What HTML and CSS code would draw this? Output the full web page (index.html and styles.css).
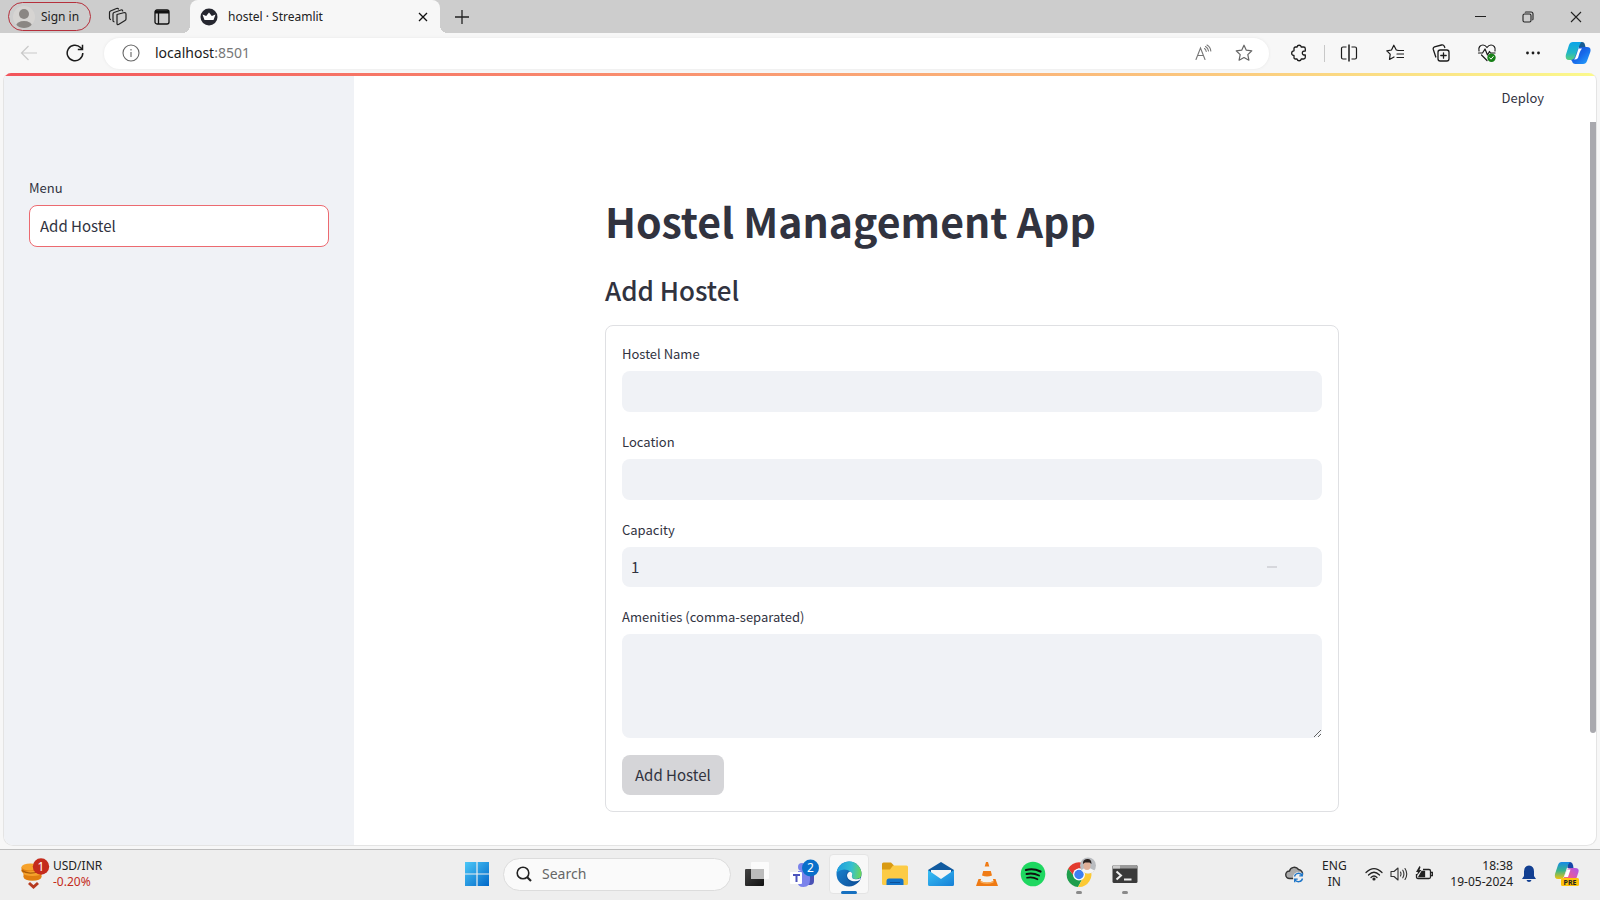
FILE: index.html
```html
<!DOCTYPE html>
<html lang="en">
<head>
<meta charset="utf-8">
<title>hostel · Streamlit</title>
<link rel="stylesheet" href="styles.css">
</head>
<body>
<div class="desktop">
  <header class="tabstrip">
    <button class="signin" type="button">
      <svg width="26" height="26" viewBox="0 0 26 26"><defs><clipPath id="av"><circle cx="13" cy="13" r="11"/></clipPath></defs><circle cx="13" cy="13" r="11" fill="#d6d4d2"/><g clip-path="url(#av)" fill="#8a8683"><circle cx="13" cy="10" r="5"/><ellipse cx="13" cy="22" rx="8" ry="5"/></g></svg>
      <span>Sign in</span>
    </button>
    <button class="strip-btn" type="button" aria-label="Workspaces">
      <svg width="20" height="20" viewBox="0 0 20 20" fill="none" stroke="#222" stroke-width="1.2" stroke-linejoin="round" stroke-linecap="round"><path d="M9 7.500 16.500 5.500Q18 5.500 18 7V12Q18 13 17 13.500L10.500 17.500Q9 18 9 16.500Z"/><path d="M6 14.800Q5 14.500 5 13.500V7Q5 6 6 5.500L13 3Q14.500 2.700 14.700 4"/><path d="M2.500 12.500Q1.500 12 1.500 11V5.500Q1.500 4.500 2.500 4L8.500 1.500Q10 1 10.500 2"/></svg>
    </button>
    <button class="strip-btn" type="button" aria-label="Tab actions">
      <svg width="18" height="18" viewBox="0 0 18 18" fill="none" stroke="#111" stroke-width="1.3"><rect x="2" y="2" width="14" height="14" rx="2"/><path d="M2 4h14" stroke-width="3"/><path d="M5.500 5v11"/></svg>
    </button>
    <div class="tab">
      <svg width="18" height="18" viewBox="0 0 18 18"><circle cx="9" cy="9" r="8.500" fill="#262730"/><path d="M2.500 6.500 6.200 8 9 4.500 11.800 8 15.500 6.500 13.500 12H4.500Z" fill="#fff"/></svg>
      <span class="tab-title">hostel · Streamlit</span>
      <button class="tab-close" type="button" aria-label="Close tab"><svg width="10" height="10" viewBox="0 0 10 10" stroke="#111" stroke-width="1.300"><path d="M1 1l8 8M9 1 1 9"/></svg></button>
    </div>
    <button class="strip-btn" type="button" aria-label="New tab"><svg width="14" height="14" viewBox="0 0 14 14" stroke="#222" stroke-width="1.300"><path d="M7 0v14M0 7h14"/></svg></button>
    <div class="win-controls">
      <button type="button" aria-label="Minimize"><svg width="12" height="12" viewBox="0 0 12 12" stroke="#222" stroke-width="1"><path d="M1 5.500h11"/></svg></button>
      <button type="button" aria-label="Restore"><svg width="12" height="12" viewBox="0 0 12 12" fill="none" stroke="#222" stroke-width="1.100"><rect x="1" y="3" width="8" height="8" rx="1.500"/><path d="M3 1.500Q3.300 1 4 1H9Q11 1 11 3V8Q11 8.800 10.300 9"/></svg></button>
      <button type="button" aria-label="Close"><svg width="12" height="12" viewBox="0 0 12 12" stroke="#222" stroke-width="1.100"><path d="M1 1l10 10M11 1 1 11"/></svg></button>
    </div>
  </header>

  <nav class="toolbar">
    <button class="tool" type="button" aria-label="Back" disabled><svg width="18" height="16" viewBox="0 0 18 16" fill="none" stroke="#c9c9c9" stroke-width="1.200"><path d="M17 8H1.500M8.500 1 1.500 8l7 7"/></svg></button>
    <button class="tool" type="button" aria-label="Refresh"><svg width="18" height="18" viewBox="0 0 18 18" fill="none" stroke="#1b1b1b" stroke-width="1.500"><path d="M16.800 9A7.800 7.800 0 1 1 14.500 3.500L16.500 5.500"/><path d="M16.500 .8V5.500H11.800"/></svg></button>
    <div class="address">
      <svg width="18" height="18" viewBox="0 0 18 18" fill="none" stroke="#666" stroke-width="1.100"><circle cx="9" cy="9" r="8"/><path d="M9 8v5M9 5v1.400"/></svg>
      <a class="url" href="#">localhost<span>:8501</span></a>
      <button type="button" aria-label="Read aloud"><svg width="18" height="18" viewBox="0 0 18 18" fill="none" stroke="#777" stroke-width="1.100" stroke-linecap="round"><path d="M2 15.500 6.500 4 11 15.500M3.500 11.500h6"/><path d="M10.500 4.500Q12 5.500 12.200 7.500M11.500 2.500Q14.200 4 14.500 7M13 1Q16.500 3 16.800 7"/></svg></button>
      <button type="button" aria-label="Add to favorites"><svg width="18" height="18" viewBox="0 0 18 18" fill="none" stroke="#666" stroke-width="1.200" stroke-linejoin="round"><path d="M9 1.200l2.300 5 5.500.6-4 3.800 1.100 5.600L9 13.500l-4.900 2.700 1.100-5.600-4-3.800 5.500-.6Z"/></svg></button>
    </div>
    <button class="tool" type="button" aria-label="Extensions"><svg width="18" height="18" viewBox="0 0 18 18" fill="none" stroke="#1b1b1b" stroke-width="1.300" stroke-linejoin="round"><path d="M7 3A2.200 2.200 0 0 1 11.300 3H13.500Q15.300 3 15.300 4.800V7Q12.300 6.800 12.300 9T15.300 11V13.200Q15.300 15 13.500 15H11.300A2.200 2.200 0 0 1 7 15H5.500Q4 15 4 13.500V11.500A2.300 2.300 0 0 1 4 6.800V4.500Q4 3 5.500 3Z"/></svg></button>
    <span class="divider"></span>
    <button class="tool" type="button" aria-label="Split screen"><svg width="18" height="18" viewBox="0 0 18 18" fill="none" stroke="#1b1b1b" stroke-width="1.200"><path d="M6.500 3H3Q1.500 3 1.500 4.500V13.500Q1.500 15 3 15H6.500M11.500 3H15Q16.500 3 16.500 4.500V13.500Q16.500 15 15 15H11.500"/><path d="M9 .5v17" stroke-width="1.500"/></svg></button>
    <button class="tool" type="button" aria-label="Favorites"><svg width="18" height="18" viewBox="0 0 18 18" fill="none" stroke="#1b1b1b" stroke-width="1.200" stroke-linejoin="round" stroke-linecap="round"><path d="M12 6.300 10.300 6 7.800 1.200 5.500 6 .8 6.800 4.200 10.200 3.500 15.500 8 13M12.500 6.500h5M11 10h6.500M11 13.500h6.500"/></svg></button>
    <button class="tool" type="button" aria-label="Collections"><svg width="18" height="18" viewBox="0 0 18 18" fill="none" stroke="#1b1b1b" stroke-width="1.300" stroke-linecap="round"><rect x="6" y="6" width="11" height="11" rx="2.200"/><path d="M11.500 8.800v5.400M8.800 11.500h5.400M3.800 13 1.300 5.500Q.8 3.500 2.500 2.800L9.500 1Q11.500.5 12.300 2.300L12.800 3.500"/></svg></button>
    <button class="tool" type="button" aria-label="Browser essentials"><svg width="20" height="20" viewBox="0 0 20 20" fill="none" stroke="#1b1b1b" stroke-width="1.200" stroke-linejoin="round" stroke-linecap="round"><path d="M2 8C1 4 3.500 2 6 2 8 2 9.300 3.500 10 4.500 10.700 3.500 12 2 14 2 16.500 2 19 4.500 18 8M4.500 12 10 17.500"/><path d="M1.500 10H5.500L8 6 10.500 12 12.500 8.500 13.500 10H18"/><circle cx="14.500" cy="14.800" r="4.200" fill="#178017" stroke="none"/><path d="M12.700 14.800l1.300 1.400 2.300-2.700" stroke="#fff" stroke-width="1"/></svg></button>
    <button class="tool" type="button" aria-label="Settings and more"><svg width="16" height="4" viewBox="0 0 16 4" fill="#1b1b1b"><circle cx="2.500" cy="2" r="1.400"/><circle cx="8" cy="2" r="1.400"/><circle cx="13.500" cy="2" r="1.400"/></svg></button>
    <button class="tool last" type="button" aria-label="Copilot"><svg width="26" height="24" viewBox="0 0 26 24"><defs><linearGradient id="c1" x1="0" y1="0" x2="0" y2="1"><stop offset="0" stop-color="#0aa4ea"/><stop offset=".6" stop-color="#22b7c4"/><stop offset="1" stop-color="#5bd07c"/></linearGradient><linearGradient id="c2" x1="0" y1="0" x2="1" y2="1"><stop offset="0" stop-color="#1748c9"/><stop offset=".5" stop-color="#1768e9"/><stop offset="1" stop-color="#27a8ff"/></linearGradient></defs><path d="M13 1h4q2.500 0 3 3l1 4h-7Z" fill="#155a92"/><path d="M8 1h8.500Q14.500 3 13 9L11 15Q10 19 7 19H4Q0 19 .800 14L4 4Q5 1 8 1Z" fill="url(#c1)"/><path d="M6 19q2.500 0 4-3l3-8q1-2 3-2h6q4.500 0 3.300 5L22 20q-1 3-4 3H10.500Q7.500 23 7 20Z" fill="url(#c2)"/><path d="M13.500 7.500h3.500Q15.500 9 14.500 12L13 17Q12 18.500 9 18.500 10.500 17 11.500 13.500Z" fill="#fff"/></svg></button>
  </nav>

  <div class="page">
    <div class="decoration"></div>
    <aside class="sidebar">
      <label for="menu">Menu</label>
      <select id="menu"><option>Add Hostel</option></select>
    </aside>
    <div class="view">
      <div class="app-header"><button type="button">Deploy</button></div>
      <main class="content">
        <h1>Hostel Management App</h1>
        <h2>Add Hostel</h2>
        <form class="form">
          <div class="field"><label for="name">Hostel Name</label><input id="name" type="text"></div>
          <div class="field"><label for="location">Location</label><input id="location" type="text"></div>
          <div class="field"><label for="capacity">Capacity</label>
            <div class="number"><input id="capacity" type="number" value="1" min="1"><button type="button" aria-label="Decrease" disabled><svg width="10" height="2" viewBox="0 0 10 2"><path d="M0 1h10" stroke="#d6d7dc" stroke-width="2"/></svg></button></div>
          </div>
          <div class="field area"><label for="amenities">Amenities (comma-separated)</label><textarea id="amenities"></textarea></div>
          <button class="submit" type="button">Add Hostel</button>
        </form>
      </main>
    </div>
    <div class="scroll"><div class="thumb"></div></div>
  </div>

  <footer class="taskbar">
    <div class="widget">
      <svg width="30" height="34" viewBox="0 0 30 34"><g fill="#e07f10"><ellipse cx="12.500" cy="20" rx="9" ry="3.800"/><path d="M3.500 16h18v4h-18z"/><path d="M1.500 10h18v4h-18z"/><ellipse cx="10.500" cy="14" rx="9" ry="3.500"/></g><g fill="#f6a22b"><ellipse cx="12.500" cy="16.500" rx="9" ry="2.500"/><ellipse cx="10.500" cy="10" rx="9" ry="3.500"/></g><path d="M2 13.500q6 4.500 17 1" stroke="#a95c0a" stroke-width="1.200" fill="none"/><path d="M9 26l4.500 4 4.500-4" fill="none" stroke="#b63a20" stroke-width="3"/><circle cx="21" cy="9.500" r="8.200" fill="#c42b1c"/><text class="badge-text" x="21" y="14" text-anchor="middle">1</text></svg>
      <div class="rate"><span>USD/INR</span><span class="down">-0.20%</span></div>
    </div>
    <div class="apps">
      <button class="app" type="button" aria-label="Start"><svg width="24" height="24" viewBox="0 0 24 24"><defs><linearGradient id="w" x1="0" y1="0" x2="1" y2="1"><stop offset="0" stop-color="#4cc8f8"/><stop offset="1" stop-color="#0067c8"/></linearGradient></defs><path d="M0 0h11.400v11.400H0zM12.600 0H24v11.400H12.600zM0 12.600h11.400V24H0zM12.600 12.600H24V24H12.600z" fill="url(#w)"/></svg></button>
      <label class="search"><svg width="16" height="16" viewBox="0 0 16 16" fill="none" stroke="#222"><circle cx="7" cy="7" r="5.800" stroke-width="1.600"/><path d="M11 11l4 4" stroke-width="2.200"/></svg><input type="text" placeholder="Search" aria-label="Search"></label>
      <button class="app" type="button" aria-label="Task view"><svg width="26" height="26" viewBox="0 0 26 26"><defs><linearGradient id="tv" x1="0" y1="0" x2="1" y2="1"><stop offset="0" stop-color="#444"/><stop offset="1" stop-color="#111"/></linearGradient></defs><rect x="1" y="8" width="19" height="17" rx="1" fill="url(#tv)"/><rect x="7" y="1" width="18" height="17" rx="1" fill="#fff" fill-opacity=".75"/><path d="M7 8h13v10H7z" fill="#bbb"/></svg></button>
      <button class="app" type="button" aria-label="Teams"><svg width="32" height="32" viewBox="0 0 32 32"><path d="M20 14h7v9q0 4-4 4h-3z" fill="#4a52b5"/><path d="M11 13h12v9q0 7-6.500 7T11 23z" fill="#7b83eb"/><circle cx="15" cy="9" r="4" fill="#7b83eb"/><rect x="3" y="14" width="12" height="12" rx="1" fill="#fff"/><path d="M6 17h7M9.500 17v7" stroke="#4b53bc" stroke-width="2"/><circle cx="23.500" cy="10" r="8.500" fill="#0a6fca"/><text class="badge-text" x="23.500" y="14" text-anchor="middle">2</text></svg></button>
      <button class="app active" type="button" aria-label="Edge"><svg width="26" height="26" viewBox="0 0 26 26"><defs><linearGradient id="e1" x1="0" y1=".3" x2="1" y2=".4"><stop offset="0" stop-color="#1e9de0"/><stop offset=".6" stop-color="#35bfd0"/><stop offset="1" stop-color="#69d65d"/></linearGradient><linearGradient id="e2" x1="0" y1="0" x2="1" y2="1"><stop offset="0" stop-color="#1b8bd8"/><stop offset="1" stop-color="#0c4a94"/></linearGradient></defs><circle cx="13" cy="13" r="12.500" fill="url(#e2)"/><path d="M.6 11.500A12.500 12.500 0 0 1 25.500 13q0 5-5.500 5-5 0-4-3 1-2-1-4Q8 6 .6 11.500Z" fill="url(#e1)"/><path d="M10.500 14q0-3 3-3.500 3 .5 2.500 4-1 3 3 3.600 3.500.3 5.800-1.500-.5 3.500-3.500 5.500-8 1-10.500-5Z" fill="#0d549d"/><path d="M11 14q.5-3 3-3.500 3 1 2 4-1 3.500 4 3.800 2.500 0 5-1.500l-1.500 2.500q-3 1.500-7.500.7-5-1.500-5-6Z" fill="#f7f8f9"/></svg></button>
      <button class="app" type="button" aria-label="File Explorer"><svg width="26" height="26" viewBox="0 0 26 26"><path d="M0 3q0-1.500 1.500-1.500H9L12 4.500V9H0z" fill="#d99a12"/><path d="M0 8.500h8L11 4.500H24.500Q26 4.500 26 6V22.500Q26 24 24.500 24H1.500Q0 24 0 22.500z" fill="#fccb45"/><path d="M4.500 24V20q0-2.500 2.500-2.500H19q2.500 0 2.500 2.500v4z" fill="#1273c9"/><path d="M8 21.500h10" stroke="#0b4f99"/></svg></button>
      <button class="app" type="button" aria-label="Mail"><svg width="26" height="26" viewBox="0 0 26 26"><defs><linearGradient id="m" x1="0" y1="0" x2="1" y2="1"><stop offset="0" stop-color="#39c1f5"/><stop offset="1" stop-color="#167fd6"/></linearGradient></defs><path d="M0 9 13 1l13 8v5H0z" fill="#105a9f"/><path d="M3 9h20v8H3z" fill="#f4f4f4"/><path d="M0 9l13 9L26 9v14.500Q26 25 24.500 25H1.500Q0 25 0 23.500z" fill="url(#m)"/></svg></button>
      <button class="app" type="button" aria-label="VLC"><svg width="24" height="26" viewBox="0 0 24 26"><path d="M3.500 18h17L23 25H1z" fill="#ef7a13"/><path d="M11 1h2L18.500 20q-6.500 3-13 0z" fill="#f1f1ef"/><path d="M11 1h2l1.300 4.500H9.700zM8.200 10h7.600l1.200 4.500q-5 2-10 0z" fill="#f07c16"/><path d="M5.500 20q6.500 3 13 0v1.500q-6.500 2.500-13 0z" fill="#f9b05f"/></svg></button>
      <button class="app" type="button" aria-label="Spotify"><svg width="26" height="26" viewBox="0 0 26 26" fill="none" stroke="#101010" stroke-linecap="round"><circle cx="13" cy="13" r="12.300" fill="#1ed760" stroke="none"/><path d="M6 9q7.500-2 14.500 1.500" stroke-width="2.200"/><path d="M6.500 13q6.500-1.500 12.500 1.500" stroke-width="1.900"/><path d="M7 16.800q5.500-1.300 10.500 1.500" stroke-width="1.600"/></svg></button>
      <button class="app running" type="button" aria-label="Chrome"><svg width="36" height="36" viewBox="0 0 36 36"><path d="M7.200 12.500A12.500 12.500 0 0 0 17 31L21.800 22 13 20z" fill="#1e9e4c"/><path d="M7.200 12.500A12.500 12.500 0 0 1 28.800 12.500H17L13 20z" fill="#e33b2e"/><path d="M28.800 12.500A12.500 12.500 0 0 1 17 31L22 22V12.500z" fill="#fcc934"/><circle cx="18" cy="18.500" r="6" fill="#fff"/><circle cx="18" cy="18.500" r="4.700" fill="#3f7ff0"/><circle cx="27" cy="9.500" r="8" fill="#b9bcc0"/><path d="M20.500 14Q26 9.500 33.500 14.500A8 8 0 0 1 20.500 14Z" fill="#f4f4f4"/><ellipse cx="26" cy="9.500" rx="3.500" ry="4.500" fill="#e0b098"/><path d="M22 8Q21.500 3.500 26 3t4.500 5L28.500 6.500 24 6.500z" fill="#2a2220"/></svg></button>
      <button class="app running" type="button" aria-label="Terminal"><svg width="26" height="26" viewBox="0 0 26 26"><rect x=".5" y="4" width="25" height="18" rx="1.500" fill="#3a3a3a"/><path d="M.5 7.500V5.500Q.5 4 2 4H24q1.500 0 1.500 1.500v2z" fill="#9a9a9a"/><path d="M1 4.500h7v3H1z" fill="#ccc"/><path d="M4.500 10.500l4.500 4-4.500 4M12 18.500h7.500" fill="none" stroke="#eee" stroke-width="2"/></svg></button>
    </div>
    <div class="tray">
      <svg width="20" height="20" viewBox="0 0 20 20"><path d="M4.500 14.500A3.700 3.700 0 0 1 4.500 7 5 5 0 0 1 13.500 5.500 4.500 4.500 0 0 1 17.500 11L10 14.500Z" fill="#aaa" stroke="#333" stroke-width="1.400"/><circle cx="13.500" cy="13.500" r="5.500" fill="#eee"/><path d="M9.500 12.500A4 4 0 0 1 17 11.500M17.500 14.500A4 4 0 0 1 10 15.500M17.300 8.800v3h-3M9.700 18.200v-3h3" fill="none" stroke="#1b74c8" stroke-width="1.300"/></svg>
      <div class="lang"><span>ENG</span><span>IN</span></div>
      <div class="status">
        <svg width="18" height="16" viewBox="0 0 18 16" fill="none" stroke="#222" stroke-width="1.200" stroke-linecap="round"><path d="M1 6.500Q9-1.500 17 6.500M3.500 9Q9 3.500 14.500 9M6 11.500Q9 8.500 12 11.500"/><circle cx="9" cy="13" r="1" fill="#222"/></svg>
        <svg width="18" height="16" viewBox="0 0 18 16" fill="none" stroke="#333" stroke-width="1.100" stroke-linecap="round" stroke-linejoin="round"><path d="M1 5.500H4L8 2V14L4 10.500H1ZM10.500 6Q11.500 8 10.500 10M12.800 4.200Q15 8 12.800 11.800M15 2.500Q18.500 8 15 13.500"/></svg>
        <svg width="18" height="16" viewBox="0 0 18 16" fill="none" stroke="#222" stroke-width="1.300"><path d="M8 3.500h6q1.500 0 1.500 1.500v6q0 1.500-1.500 1.500H3Q1.500 12.500 1.500 11V8"/><path d="M16 6.500h1.500v3H16"/><path d="M4 10.500 7 5.500H9.500v5z" fill="#222"/><path d="M4.500 0 1 6H3L1.500 10 6.500 4H4.500L5.500 1z" fill="#222" stroke="none"/></svg>
      </div>
      <div class="clock"><span>18:38</span><span>19-05-2024</span></div>
      <svg width="16" height="18" viewBox="0 0 16 18" fill="#123f91"><path d="M8 .5Q13 1 13 6.500V11L15 14H1L3 11V6.500Q3 1 8 .5ZM5.500 15h5Q10 17 8 17T5.500 15Z"/></svg>
      <svg class="copilot" width="26" height="26" viewBox="0 0 26 26"><defs><linearGradient id="p1" x1="0" y1="0" x2="0" y2="1"><stop offset="0" stop-color="#1689e8"/><stop offset=".5" stop-color="#38b48c"/><stop offset="1" stop-color="#f2c40d"/></linearGradient><linearGradient id="p2" x1="1" y1="0" x2="0" y2="1"><stop offset="0" stop-color="#a857ef"/><stop offset=".6" stop-color="#ef5c92"/><stop offset="1" stop-color="#fb963d"/></linearGradient></defs><path d="M13 1h3q3 0 3.500 6h-6z" fill="#1647a8"/><path d="M7.500 1H16Q14 3 12.500 8L10.500 14q-1 4-4 4H4q-4 0-3-5L4 4Q5 1 7.500 1Z" fill="url(#p1)"/><path d="M8 19q2-2 3-5l2-5q1-2 3-2h5q4.500 0 3.500 4L22 18.500q-1 3-4 3H8z" fill="url(#p2)"/><path d="M13 8.500h3.500L14 16h-4z" fill="#fff"/><rect x="7" y="17" width="18" height="8" rx="1.500" fill="#ffc20a"/><text class="pre" x="16" y="24" text-anchor="middle">PRE</text></svg>
    </div>
  </footer>
</div>
</body>
</html>
```
FILE: styles.css
```css
* { box-sizing: border-box; }
body { margin: 0; font-family: "Noto Sans", "Open Sans", sans-serif; font-size: 13px; color: #222; }
button { border: 0; background: none; padding: 0; margin: 0; font: inherit; color: inherit; }
svg { display: block; flex: none; }
input, select, textarea { font: inherit; color: inherit; border: 0; outline: 0; margin: 0; }

.desktop { min-height: 100vh; display: flex; flex-direction: column; background: #f7f7f7; }

/* Browser chrome */
.tabstrip { display: flex; align-items: center; height: 33px; padding-left: 8px; background: #cdcdcd; }
.signin { display: flex; align-items: center; gap: 4px; width: 83px; height: 29px; padding-left: 2px; border: 1px solid #b5303c; border-radius: 15px; font-size: 12px; margin-right: 5px; white-space: nowrap; }
.strip-btn { display: flex; align-items: center; justify-content: center; width: 44px; height: 33px; }
.tab { position: relative; display: flex; align-items: center; width: 250px; height: 33px; margin-left: 6px; padding: 0 10px; gap: 10px; background: #f7f7f7; border-radius: 8px 8px 0 0; font-size: 12px; }
.tab::before, .tab::after { content: ""; position: absolute; bottom: 0; width: 8px; height: 8px; }
.tab::before { left: -8px; background: radial-gradient(circle at 0 0, transparent 8px, #f7f7f7 8px); }
.tab::after { right: -8px; background: radial-gradient(circle at 100% 0, transparent 8px, #f7f7f7 8px); }
.tab-title { flex: 1; }
.tab-close { padding: 2px; }
.win-controls { display: flex; margin-left: auto; }
.win-controls button { display: flex; align-items: center; justify-content: center; width: 48px; height: 33px; }

.toolbar { display: flex; align-items: center; height: 40px; padding-left: 6px; }
.tool { display: flex; align-items: center; justify-content: center; width: 46px; height: 36px; }
.tool.last { width: 44px; }
.address { flex: 1; display: flex; align-items: center; height: 31px; margin: 0 7px 0 6px; padding: 0 5px 0 18px; background: #fff; border-radius: 16px; box-shadow: 0 0 3px #e6e6e6; }
.address button { display: flex; align-items: center; justify-content: center; width: 41px; height: 30px; }
.url { flex: 1; margin-left: 15px; font-size: 14px; line-height: 20px; padding-bottom: 1px; color: #1b1b1b; text-decoration: none; }
.url span { color: #777; }
.divider { width: 1px; height: 17px; margin: 0 1px 0 2px; background: #c8c8c8; }

/* Streamlit page */
.page { position: relative; flex: 1; display: flex; margin: 0 3px 3px; border: 1px solid #e4e4e4; border-top: 0; border-radius: 8px 8px 10px 10px; overflow: hidden; background: #fff; color: #31333f; font-family: "Noto Sans CJK SC", "Source Sans Pro", sans-serif; }
.decoration { position: absolute; inset: 0 0 auto; height: 3px; background: linear-gradient(90deg, #f2545b, #f98f6f 40%, #fbc77e 75%, #fbf98c); }
.sidebar { width: 350px; padding: 105px 25px 0; background: #f0f2f6; }
label { display: block; font-size: 13px; line-height: 20px; }
.sidebar select { appearance: none; display: block; width: 100%; height: 42px; margin-top: 7px; padding: 0 10px 2px; font-size: 15px; background: #fff; border: 1px solid #ec6a70; border-radius: 8px; }
.view { flex: 1; display: flex; flex-direction: column; }
.app-header { display: flex; justify-content: flex-end; padding: 15px 46px 0 0; font-size: 13px; line-height: 20px; }
.content { width: 100%; max-width: 734px; margin: 0 auto; padding: 82px 0 33px; }
h1 { margin: 0; font-size: 41px; line-height: 60px; font-weight: 700; }
h2 { margin: 22px 0 17px; font-size: 26px; line-height: 36px; font-weight: 500; }
.form { padding: 18px 16px 16px; border: 1px solid #dfe0e3; border-radius: 8px; }
.field { margin-bottom: 20px; }
.field.area { margin-bottom: 17px; }
.field > input, .number { width: 100%; height: 41px; margin-top: 7px; background: #f0f2f6; border-radius: 8px; font-size: 15px; }
.field > input { display: block; padding: 0 10px; }
.number { display: flex; align-items: center; height: 40px; padding-right: 34px; }
.number input { flex: 1; min-width: 0; height: 100%; padding: 0 9px 2px; background: none; appearance: textfield; }
.number input::-webkit-inner-spin-button { appearance: none; margin: 0; }
.number button { display: flex; align-items: center; justify-content: center; width: 32px; height: 100%; }
textarea { display: block; width: 100%; height: 104px; margin-top: 7px; padding: 10px; background: #f0f2f6; border-radius: 8px; resize: vertical; }
.submit { height: 40px; padding: 0 13px 2px; font-size: 15px; background: #d5d5d8; border-radius: 8px; }
.scroll { width: 6px; padding-top: 49px; }
.thumb { height: 611px; background: #a9a9ae; border-radius: 0 0 3px 3px; }

/* Taskbar */
.taskbar { display: grid; grid-template-columns: 1fr auto 1fr; height: 51px; padding-bottom: 2px; background: #eee; border-top: 1px solid #bdbdbd; font-size: 12px; line-height: 16px; }
.widget { display: flex; align-items: center; gap: 3px; padding-left: 20px; }
.rate, .lang, .clock { display: flex; flex-direction: column; }
.down { color: #c42b1c; }
.badge-text { font: 12px "Noto Sans", sans-serif; fill: #fff; }
.apps { display: flex; align-items: center; padding-left: 2px; }
.app { position: relative; display: flex; align-items: center; justify-content: center; width: 46px; height: 48px; }
.app svg { position: relative; }
.app.active::before { content: ""; position: absolute; inset: 4px 3px; background: #f8f8f8; border: 1px solid #e4e4e4; border-radius: 4px; }
.app.active::after, .app.running::after { content: ""; position: absolute; bottom: 4px; width: 6px; height: 3px; border-radius: 2px; background: #8a8a8a; }
.app.active::after { width: 16px; background: #1670c0; }
.search { display: flex; align-items: center; gap: 10px; width: 228px; height: 33px; margin: 0 3px; padding: 0 12px; background: #fafafa; border: 1px solid #dcdcdc; border-radius: 17px; font-size: 14px; }
.search input { flex: 1; min-width: 0; padding: 0; background: none; }
.search input::placeholder { color: #666; opacity: 1; }
.tray { display: flex; align-items: center; justify-content: flex-end; padding-right: 20px; }
.lang { width: 30px; margin: 0 16px 0 14px; text-align: center; }
.status { display: flex; gap: 7px; margin-right: 17px; }
.clock { text-align: right; margin-right: 8px; }
.copilot { margin-left: 17px; }
.pre { font: bold 7px "Noto Sans", sans-serif; fill: #222; }
```
